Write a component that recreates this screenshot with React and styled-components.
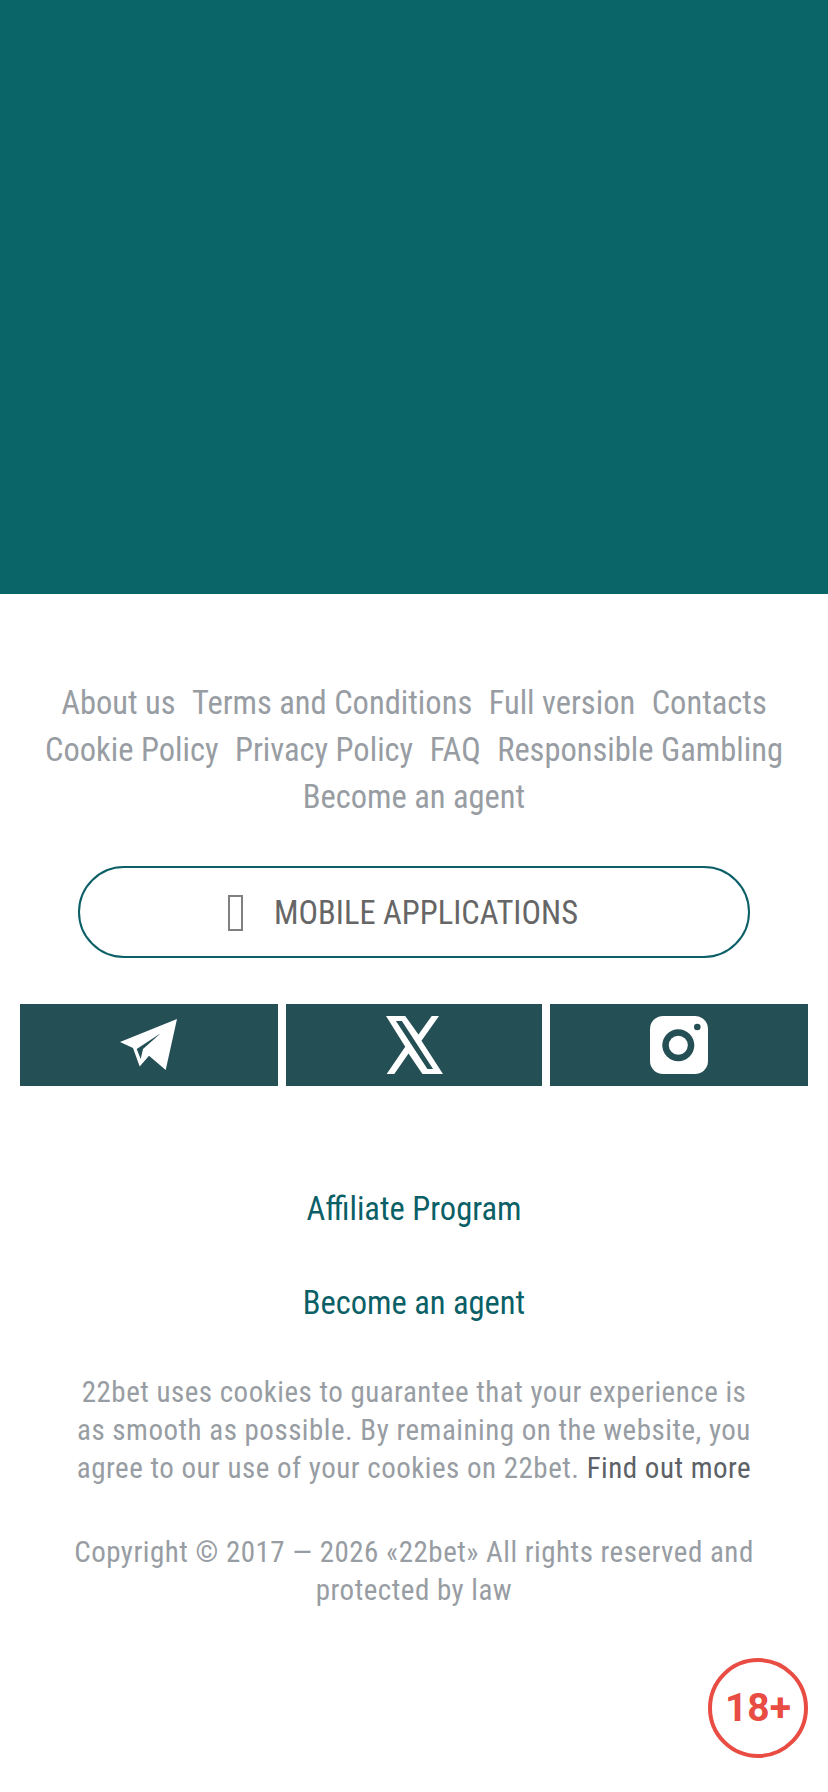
import React from 'react'
import styled, { createGlobalStyle } from 'styled-components'

const Global = createGlobalStyle`
  html, body { margin: 0; padding: 0; background: #fff; }
  body { font-family: "Roboto", "Liberation Sans", sans-serif; }
  * { box-sizing: border-box; }
`

const Page = styled.div`
  position: relative;
  width: 828px;
  height: 1792px;
  overflow: hidden;
  font-stretch: condensed;
`
const Banner = styled.div`
  height: 594px;
  background: #0a6569;
`
const Nav = styled.nav`
  margin-top: 86px;
  padding: 0 20px;
  text-align: center;
  font-size: 32.5px;
  line-height: 47px;
  color: #989da3;
`
const NavLink = styled.a`
  margin: 0 4.5px;
`
const AppButton = styled.a`
  margin: 45px auto 0;
  width: 672px;
  height: 92px;
  padding: 1px 22px 0 0;
  border: 2px solid #0b5f66;
  border-radius: 46px;
  display: flex;
  align-items: center;
  justify-content: center;
  gap: 31px;
  font-size: 32.5px;
  color: #666;
`
const MissingGlyph = styled.span`
  width: 15px;
  height: 36px;
  border: 2px solid #808080;
`
const Social = styled.div`
  margin: 46px 20px 0;
  display: grid;
  grid-template-columns: 258px 256px 258px;
  gap: 8px;
`
const SocialItem = styled.a`
  height: 82px;
  background: #244f55;
  display: flex;
  align-items: center;
  justify-content: center;
`
const Promo = styled.a`
  display: block;
  text-align: center;
  font-size: 32.5px;
  line-height: 46px;
  color: #0b5f66;
  margin-top: ${p => p.$top}px;
`
const Note = styled.p`
  margin: ${p => p.$top}px 0 0;
  padding: 0 74px;
  text-align: center;
  font-size: 29px;
  line-height: 38px;
  letter-spacing: 0.5px;
  color: #989da3;
`
const More = styled.a`
  color: #5c6166;
`
const AgeBadge = styled.div`
  position: absolute;
  right: 20px;
  top: 1658px;
  width: 100px;
  height: 100px;
  border: 4px solid #e84c42;
  border-radius: 50%;
  display: flex;
  align-items: center;
  justify-content: center;
  font-size: 39px;
  font-weight: 700;
  font-stretch: normal;
  color: #e84c42;
`

const PlaneIcon = () => (
  <svg width="60" height="54" viewBox="0 0 60 54">
    <path fill="#fff" fillRule="evenodd" d="M58 1 1 24l13 6 6.7 18.5L30 37.7 46.7 52ZM41.7 15.3 17.7 31l4 10L24 31Z" />
  </svg>
)

const XIcon = () => (
  <svg width="57" height="58" viewBox="80 47 172 175">
    <path fill="#fff" fillRule="evenodd" d="M80 47H138L178 103 218 47H240L187 122 252 222H190L148 160 105 222H82L138 140ZM110 62 205 207H222L128 62Z" />
  </svg>
)

const InstagramIcon = () => (
  <svg width="58" height="58" viewBox="0 0 58 58">
    <rect width="58" height="58" rx="13" fill="#fff" />
    <circle cx="28.3" cy="29.3" r="16" fill="#244f55" />
    <circle cx="28.3" cy="29.3" r="9.5" fill="#fff" />
    <circle cx="47.3" cy="11" r="3.3" fill="#244f55" />
  </svg>
)

export default function App() {
  const links = ['About us', 'Terms and Conditions', 'Full version', 'Contacts', 'Cookie Policy', 'Privacy Policy', 'FAQ', 'Responsible Gambling', 'Become an agent']
  return (
    <Page>
      <Global />
      <Banner />
      <Nav>
        {links.map(l => <React.Fragment key={l}><NavLink>{l}</NavLink> </React.Fragment>)}
      </Nav>
      <AppButton><MissingGlyph />MOBILE APPLICATIONS</AppButton>
      <Social>
        <SocialItem><PlaneIcon /></SocialItem>
        <SocialItem><XIcon /></SocialItem>
        <SocialItem><InstagramIcon /></SocialItem>
      </Social>
      <Promo $top={100}>Affiliate Program</Promo>
      <Promo $top={48}>Become an agent</Promo>
      <Note $top={47}>22bet uses cookies to guarantee that your experience is as smooth as possible. By remaining on the website, you agree to our use of your cookies on 22bet. <More>Find out more</More></Note>
      <Note $top={46}>Copyright © 2017 — 2026 «22bet» All rights reserved and protected by law</Note>
      <AgeBadge>18+</AgeBadge>
    </Page>
  )
}
